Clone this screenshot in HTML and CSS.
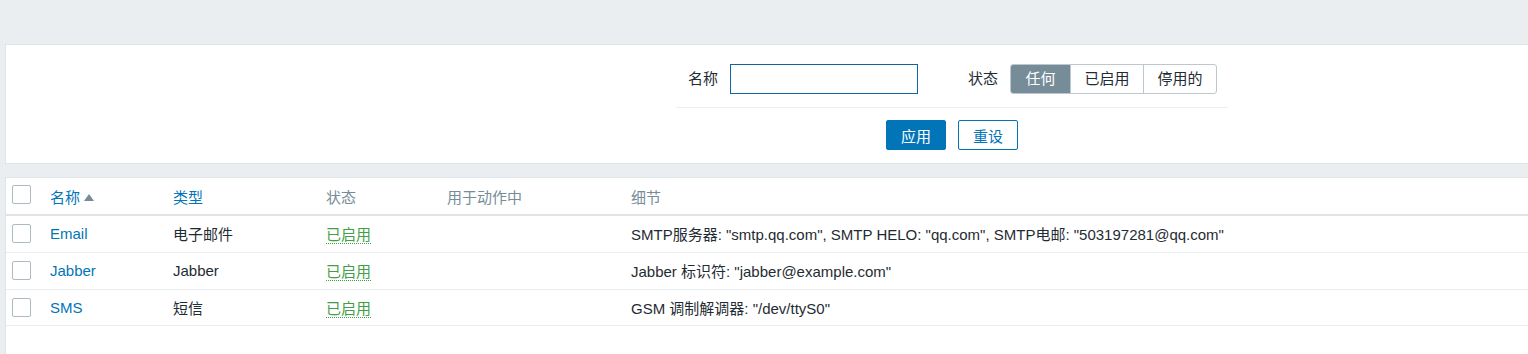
FILE: index.html
```html
<!DOCTYPE html>
<html lang="zh-CN">
<head>
    <meta charset="UTF-8">
    <title>报警媒介类型</title>
    <link rel="stylesheet" href="styles.css">
</head>
<body>
    <div class="wrapper">
        <div class="filter-box">
            <div class="filter-inner">
                <div class="filter-fields">
                    <div class="filter-col col-name">
                        <label class="filter-label">名称</label>
                        <input type="text" class="filter-input">
                    </div>
                    <div class="filter-col col-status">
                        <label class="filter-label">状态</label>
                        <div class="segmented">
                            <span class="seg seg-any active">任何</span>
                            <span class="seg">已启用</span>
                            <span class="seg">停用的</span>
                        </div>
                    </div>
                </div>
                <div class="filter-buttons">
                    <button class="btn btn-primary">应用</button>
                    <button class="btn btn-alt">重设</button>
                </div>
            </div>
        </div>

        <div class="list-box">
            <table class="list-table">
                <colgroup>
                    <col style="width: 38px">
                    <col style="width: 123px">
                    <col style="width: 153px">
                    <col style="width: 121px">
                    <col style="width: 184px">
                    <col>
                </colgroup>
                <thead>
                    <tr>
                        <th><span class="checkbox"></span></th>
                        <th><a class="sort-link sorted">名称</a></th>
                        <th><a class="sort-link">类型</a></th>
                        <th class="plain">状态</th>
                        <th class="plain">用于动作中</th>
                        <th class="plain">细节</th>
                    </tr>
                </thead>
                <tbody>
                    <tr>
                        <td><span class="checkbox"></span></td>
                        <td><a class="link">Email</a></td>
                        <td>电子邮件</td>
                        <td><a class="status-on">已启用</a></td>
                        <td></td>
                        <td>SMTP服务器: "smtp.qq.com", SMTP HELO: "qq.com", SMTP电邮: "503197281@qq.com"</td>
                    </tr>
                    <tr>
                        <td><span class="checkbox"></span></td>
                        <td><a class="link">Jabber</a></td>
                        <td>Jabber</td>
                        <td><a class="status-on">已启用</a></td>
                        <td></td>
                        <td>Jabber 标识符: "jabber@example.com"</td>
                    </tr>
                    <tr>
                        <td><span class="checkbox"></span></td>
                        <td><a class="link">SMS</a></td>
                        <td>短信</td>
                        <td><a class="status-on">已启用</a></td>
                        <td></td>
                        <td>GSM 调制解调器: "/dev/ttyS0"</td>
                    </tr>
                </tbody>
            </table>
        </div>
    </div>
</body>
</html>
```

FILE: styles.css
```css
* {
    margin: 0;
    padding: 0;
    box-sizing: border-box;
}
body {
    background-color: #ebeef0;
    color: #1f2c33;
    font-family: "Liberation Sans", Arial, "Noto Sans CJK SC", sans-serif;
    font-size: 15px;
    overflow: hidden;
    height: 354px;
}
.wrapper {
    padding: 44px 0 0 5px;
}
.filter-box {
    width: 1894px;
    background-color: #fff;
    border: 1px solid #dfe4e7;
}
.filter-inner {
    width: 552px;
    margin: 0 auto;
    padding-top: 19px;
}
.filter-fields {
    display: flex;
    padding-bottom: 13px;
    border-bottom: 1px solid #ebeef0;
}
.filter-col {
    display: flex;
    align-items: center;
}
.col-name {
    width: 254px;
}
.col-name .filter-label {
    width: 42px;
}
.col-status .filter-label {
    width: 68px;
}
.filter-label {
    text-align: right;
    margin-right: 12px;
    font-size: 15px;
    line-height: 30px;
}
.filter-input {
    width: 188px;
    height: 30px;
    border: 1px solid #10659c;
    background: #fff;
    outline: none;
}
.segmented {
    display: flex;
    height: 30px;
    border: 1px solid #bcc8ce;
    border-radius: 3px;
    overflow: hidden;
}
.seg {
    width: 73px;
    line-height: 28px;
    text-align: center;
    border-left: 1px solid #bcc8ce;
    color: #1f2c33;
}
.seg-any {
    width: 59px;
    border-left: none;
}
.seg.active {
    background-color: #768d99;
    color: #fff;
}
.filter-buttons {
    display: flex;
    justify-content: center;
    gap: 12px;
    padding: 12px 0 13px;
}
.btn {
    width: 60px;
    height: 30px;
    border-radius: 2px;
    font-family: inherit;
    font-size: 15px;
    cursor: pointer;
}
.btn-primary {
    background-color: #0275b8;
    border: 1px solid #0275b8;
    color: #fff;
}
.btn-alt {
    background-color: #fff;
    border: 1px solid #0275b8;
    color: #0275b8;
}
.list-box {
    margin-top: 13px;
    width: 1894px;
    height: 177px;
    background-color: #fff;
    border-top: 1px solid #dfe4e7;
    border-left: 1px solid #dfe4e7;
}
.list-table {
    width: 100%;
    border-collapse: collapse;
    table-layout: fixed;
}
.list-table th,
.list-table td {
    text-align: left;
    font-weight: normal;
    padding: 0 0 0 6px;
    white-space: nowrap;
    vertical-align: middle;
}
.list-table th {
    height: 37px;
    border-bottom: 2px solid #dfe4e7;
}
.list-table td {
    height: 37px;
    border-bottom: 1px solid #ebeef0;
}
.list-table tbody tr:last-child td {
    height: 36px;
}
.list-table th.plain {
    color: #768d99;
}
.checkbox {
    display: block;
    width: 19px;
    height: 19px;
    border: 1px solid #acbbc2;
    border-radius: 2px;
    background: #fff;
}
.list-table th .checkbox {
    margin-top: -4px;
}
.sort-link,
.link {
    color: #0275b8;
    text-decoration: none;
}
.sorted::after {
    content: "";
    display: inline-block;
    margin-left: 4px;
    border-left: 5px solid transparent;
    border-right: 5px solid transparent;
    border-bottom: 7px solid #768d99;
    vertical-align: 2px;
}
.status-on {
    color: #429e47;
    text-decoration: none;
    border-bottom: 1px dotted #429e47;
}
```
